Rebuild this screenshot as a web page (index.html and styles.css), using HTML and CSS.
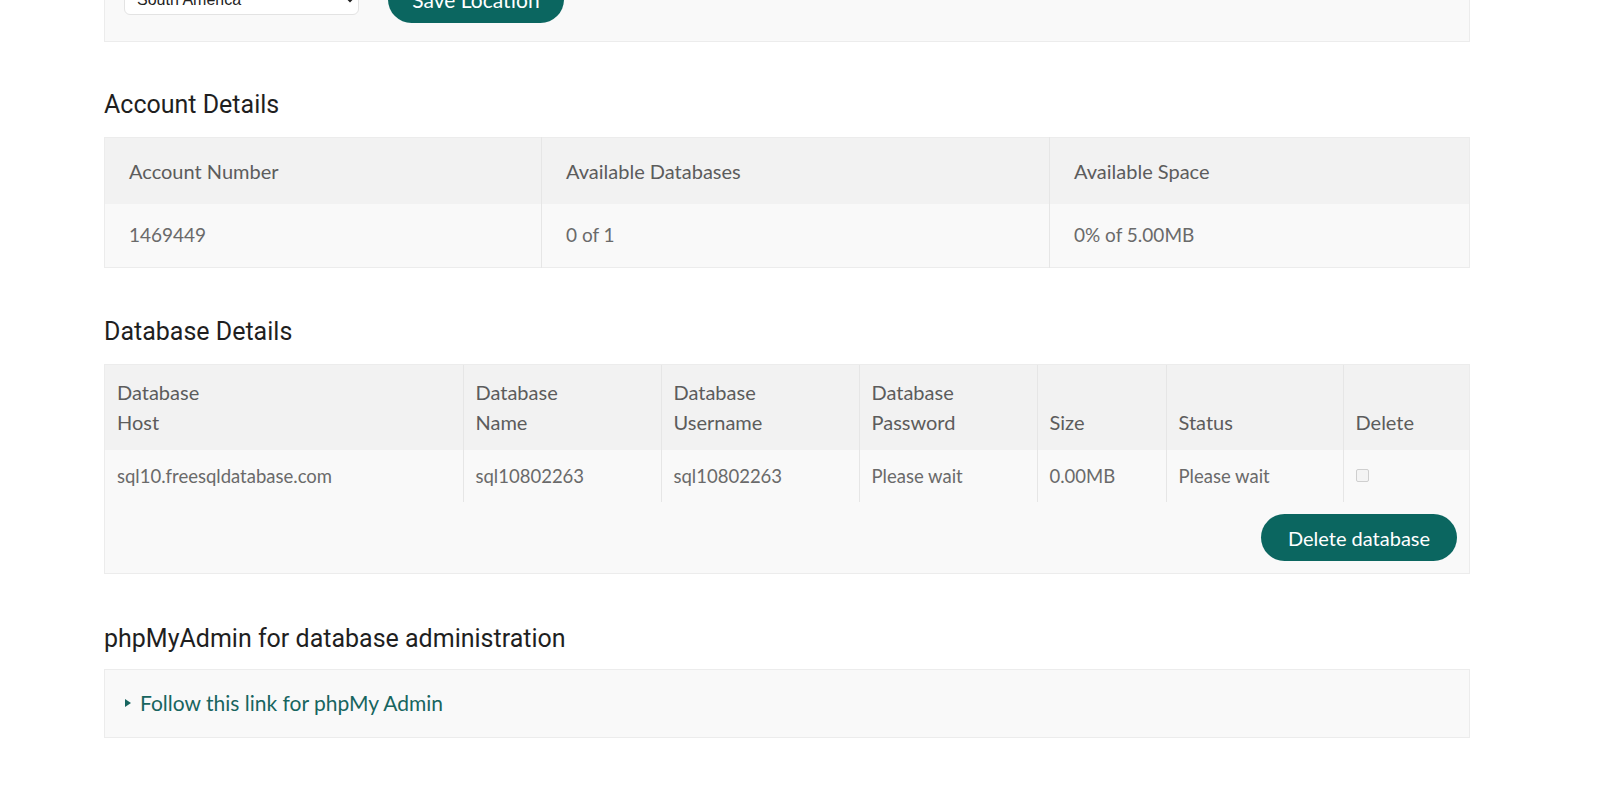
FILE: index.html
```html
<!DOCTYPE html>
<html lang="en">
<head>
<meta charset="utf-8">
<title>Database Account</title>
<link rel="stylesheet" href="styles.css">
</head>
<body>
<main class="page">
  <section class="panel location-panel">
    <select class="region-select">
      <option>South America</option>
    </select>
    <button class="btn btn-save" type="button">Save Location</button>
  </section>

  <h2 class="section-title title-account">Account Details</h2>
  <table class="data-table account-table">
    <colgroup>
      <col class="c-acc1"><col class="c-acc2"><col class="c-acc3">
    </colgroup>
    <thead>
      <tr>
        <th>Account Number</th>
        <th>Available Databases</th>
        <th>Available Space</th>
      </tr>
    </thead>
    <tbody>
      <tr>
        <td>1469449</td>
        <td>0 of 1</td>
        <td>0% of 5.00MB</td>
      </tr>
    </tbody>
  </table>

  <h2 class="section-title title-db">Database Details</h2>
  <div class="panel db-panel">
    <table class="data-table db-table">
      <colgroup>
        <col class="c-db1"><col class="c-db2"><col class="c-db3"><col class="c-db4"><col class="c-db5"><col class="c-db6"><col class="c-db7">
      </colgroup>
      <thead>
        <tr>
          <th>Database<br>Host</th>
          <th>Database<br>Name</th>
          <th>Database<br>Username</th>
          <th>Database<br>Password</th>
          <th>Size</th>
          <th>Status</th>
          <th>Delete</th>
        </tr>
      </thead>
      <tbody>
        <tr>
          <td>sql10.freesqldatabase.com</td>
          <td>sql10802263</td>
          <td>sql10802263</td>
          <td>Please wait</td>
          <td>0.00MB</td>
          <td>Please wait</td>
          <td><input class="check" type="checkbox" disabled aria-label="Delete"></td>
        </tr>
      </tbody>
    </table>
    <div class="db-actions">
      <button class="btn btn-delete" type="button">Delete database</button>
    </div>
  </div>

  <h2 class="section-title title-pma">phpMyAdmin for database administration</h2>
  <div class="panel pma-panel">
    <a class="pma-link" href="#"><span class="caret"></span>Follow this link for phpMy Admin</a>
  </div>
</main>
</body>
</html>
```

FILE: styles.css
```css
html, body {
  margin: 0;
  padding: 0;
  background: #ffffff;
}

body {
  font-family: Lato, "Open Sans", sans-serif;
  color: #5e5e5e;
}

.page {
  width: 1366px;
  margin: -43px 0 0 104px;
  padding-bottom: 60px;
}

.panel {
  background: #f9f9f9;
  border: 1px solid #ececec;
  box-sizing: border-box;
}

.location-panel {
  display: flex;
  align-items: center;
  gap: 29px;
  padding: 18px 19px;
}

.region-select {
  width: 235px;
  height: 31px;
  font-family: "Liberation Sans", Arial, sans-serif;
  font-size: 16px;
  color: #222;
  background: #fff;
  border: 1px solid #e3e3e3;
  border-radius: 6px;
  padding: 0 8px;
}

.btn {
  font-family: Lato, "Open Sans", sans-serif;
  font-size: 20px;
  color: #ffffff;
  background: #0b6660;
  border: 0;
  border-radius: 24px;
  height: 47px;
  padding: 0 24px;
  cursor: pointer;
}

.btn-save {
  width: 176px;
  font-size: 21px;
}

.section-title {
  font-family: Roboto, "Open Sans", sans-serif;
  font-weight: 400;
  font-size: 25px;
  line-height: 32px;
  color: #1f1f1f;
  margin: 0;
}

.title-account { margin: 47px 0 16px; }
.title-db { margin: 48px 0 16px; }
.title-pma { margin: 49px 0 14px; }

.data-table {
  width: 100%;
  border-collapse: collapse;
  table-layout: fixed;
  font-size: 20px;
  line-height: 30px;
}

.data-table th,
.data-table td {
  text-align: left;
  vertical-align: middle;
  font-weight: 400;
  border-left: 1px solid #e6e6e6;
}

.data-table th:first-child,
.data-table td:first-child {
  border-left: 0;
}

.data-table th {
  background: #f2f2f2;
  color: #5c5c5c;
}

.data-table td {
  background: #f9f9f9;
  color: #6a6a6a;
}

.account-table {
  border: 1px solid #ececec;
}

.account-table th { padding: 18px 24px 18px; }
.account-table td { padding: 16px 24px 17px; font-size: 19px; }

.c-acc1 { width: 437px; }
.c-acc2 { width: 508px; }
.c-acc3 { width: auto; }

.db-panel {
  display: flex;
  flex-direction: column;
}

.db-table th {
  padding: 12px 12px 13px;
  vertical-align: bottom;
}

.db-table td {
  padding: 11px 12px;
  font-size: 18.5px;
  vertical-align: middle;
}

.c-db1 { width: 358px; }
.c-db2 { width: 198px; }
.c-db3 { width: 198px; }
.c-db4 { width: 178px; }
.c-db5 { width: 129px; }
.c-db6 { width: 177px; }
.c-db7 { width: auto; }

.check {
  appearance: none;
  -webkit-appearance: none;
  width: 13px;
  height: 13px;
  margin: 0;
  border: 1px solid #cfcfcf;
  border-radius: 2px;
  background: #f4f4f4;
  vertical-align: -1px;
  position: relative;
  top: -2px;
}

.db-actions {
  display: flex;
  justify-content: flex-end;
  padding: 12px 12px 12px;
}

.btn-delete {
  width: 196px;
}

.pma-panel {
  padding: 18px 18px 19px 20px;
}

.pma-link {
  display: inline-flex;
  align-items: center;
  gap: 9px;
  font-size: 21px;
  line-height: 30px;
  color: #17655f;
  text-decoration: none;
}

.caret {
  width: 0;
  height: 0;
  border-top: 4.5px solid transparent;
  border-bottom: 4.5px solid transparent;
  border-left: 6px solid #17655f;
}
```
